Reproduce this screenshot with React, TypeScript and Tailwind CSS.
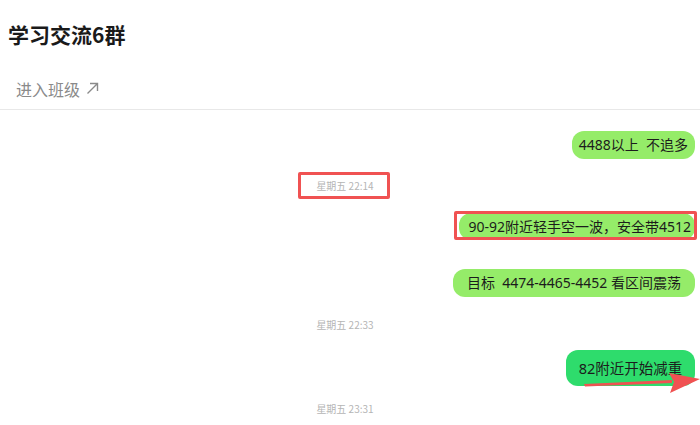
const font = { fontFamily: '"Noto Sans CJK SC", "Noto Sans", sans-serif' };
const bubbleFont = { fontFamily: '"Noto Sans", "Noto Sans CJK SC", sans-serif' };

function Stamp({ text, boxed }: { text: string; boxed?: boolean }) {
  return (
    <div className="flex justify-center pr-[10px] h-[14px]">
      <span className="relative text-[10px] leading-[14px] text-[#b5b5b5]">
        {text}
        {boxed && (
          <span className="absolute -left-[18px] -right-[16px] -top-[7px] -bottom-[6px] border-[3px] border-[#f05252] rounded-[2px]" />
        )}
      </span>
    </div>
  );
}

function Bubble({
  text,
  dark,
  className = '',
  children,
}: {
  text: string;
  dark?: boolean;
  className?: string;
  children?: React.ReactNode;
}) {
  return (
    <div className="flex justify-end pr-[5px]">
      <div
        style={bubbleFont}
        className={`relative rounded-[12px] whitespace-pre text-[#1c1c1c] ${
          dark ? 'bg-[#2edc6c]' : 'bg-[#95ec69]'
        } ${className}`}
      >
        {text}
        {children}
      </div>
    </div>
  );
}

export default function App() {
  return (
    <div className="w-[700px] h-[425px] bg-white overflow-hidden" style={font}>
      {/* Header */}
      <div className="h-[70px] flex items-center px-[8px]">
        <h1 className="text-[21px] font-bold text-[#1a1a1a]">学习交流6群</h1>
      </div>
      <div className="h-[40px] flex items-center px-[16px] pb-[2px] border-b border-[#e8e8e8]">
        <span className="text-[16px] text-[#8a8a8a]">进入班级</span>
        <svg className="ml-[6px] w-[13px] h-[13px]" viewBox="0 0 13 13" fill="none" stroke="#8a8a8a" strokeWidth="1.4">
          <path d="M1.5 11.5 L11.5 1.5 M4 1.5 H11.5 V9" />
        </svg>
      </div>

      {/* Messages */}
      <div className="flex flex-col pt-[21px]">
        <Bubble text="4488以上  不追多" className="h-[28px] px-[7px] text-[14px] leading-[28px]" />
        <div className="mt-[20px]">
          <Stamp text="星期五 22:14" boxed />
        </div>
        <div className="mt-[20px]">
          <Bubble text="90-92附近轻手空一波，安全带4512" className="h-[27px] pl-[9px] pr-[4px] text-[14px] leading-[28px]">
            <span className="absolute -left-[5px] -right-[2px] -top-[2px] -bottom-[0px] border-[3px] border-[#f05252] rounded-[2px]" />
          </Bubble>
        </div>
        <div className="mt-[29px]">
          <Bubble text="目标  4474-4465-4452 看区间震荡" className="h-[28px] px-[14px] text-[14px] leading-[28px]" />
        </div>
        <div className="mt-[21px]">
          <Stamp text="星期五 22:33" />
        </div>
        <div className="mt-[18px]">
          <Bubble text="82附近开始减重" dark className="w-[129px] h-[36px] text-center text-[14.5px] leading-[36px]">
            <svg className="absolute -right-[5px] top-[19px] w-[116px] h-[24px] overflow-visible" viewBox="0 0 116 24">
              <path d="M0 15 L88 11 L88 14 L1 17.5 Z" fill="#f05252" />
              <path d="M85 4 L116 10 L86 24 L90 13 Z" fill="#f05252" />
            </svg>
          </Bubble>
        </div>
        <div className="mt-[16px]">
          <Stamp text="星期五 23:31" />
        </div>
      </div>
    </div>
  );
}
